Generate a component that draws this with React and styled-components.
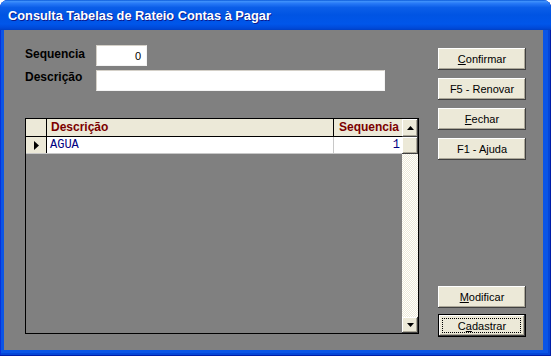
import React from 'react';
import styled, { createGlobalStyle } from 'styled-components';

const Global = createGlobalStyle`
  html, body { margin: 0; padding: 0; background: #ffffff; overflow: hidden; }
  body { width: 551px; height: 356px; font-family: "Liberation Sans", Arial, sans-serif; }
`;

const Window = styled.div`
  width: 551px;
  height: 356px;
  box-sizing: border-box;
  display: flex;
  flex-direction: column;
  background: #0a55e6;
  border-radius: 8px 8px 0 0;
  box-shadow: inset -1px -1px 0 #001ea8, inset 1px 0 0 #0831d9, inset -3px -3px 0 #0546d8;
  overflow: hidden;
`;

const TitleBar = styled.div`
  height: 30px;
  flex: none;
  display: flex;
  align-items: center;
  padding-left: 8px;
  background: linear-gradient(
    180deg,
    #0a5ad8 0%,
    #3d8ffa 5%,
    #2678f6 12%,
    #0b5ee8 25%,
    #0054e3 50%,
    #0056ea 80%,
    #0049d8 94%,
    #0040c4 100%
  );
  color: #ffffff;
  font: bold 12.8px "Liberation Sans", Arial, sans-serif;
  text-shadow: 1px 1px 0 #0c1a8c;
`;

const Client = styled.div`
  flex: 1;
  display: flex;
  background: #808080;
  margin: 0 8px 6px 4px;
`;

const LeftColumn = styled.div`
  width: 394px;
  padding: 15px 0 0 21px;
  display: flex;
  flex-direction: column;
`;

const Form = styled.div`
  display: grid;
  grid-template-columns: 71px auto;
  row-gap: 4px;
  align-items: start;
`;

const Label = styled.div`
  font: bold 12px "Liberation Sans", Arial, sans-serif;
  color: #000000;
  line-height: 14px;
  padding-top: ${p => p.$top}px;
`;

const Input = styled.div`
  box-sizing: border-box;
  width: ${p => p.$w}px;
  height: ${p => p.$h}px;
  background: #ffffff;
  border: 1px solid #d4d0c8;
  border-right-color: #f4f4f4;
  border-bottom-color: #f4f4f4;
  font: 11px "Liberation Sans", Arial, sans-serif;
  color: #000;
  display: flex;
  align-items: center;
  justify-content: flex-end;
  padding-right: 5px;
`;

const DataGrid = styled.div`
  margin-top: 27px;
  box-sizing: border-box;
  width: 394px;
  height: 216px;
  border: 1px solid #000000;
  display: flex;
`;

const TableArea = styled.div`
  flex: 1;
  display: flex;
  flex-direction: column;
`;

const Row = styled.div`
  display: grid;
  grid-template-columns: 21px 287px 1fr;
  height: ${p => p.$h}px;
  box-sizing: border-box;
  border-bottom: 1px solid ${p => p.$line};
`;

const HeaderCell = styled.div`
  box-sizing: border-box;
  background: #ece9d8;
  border-right: ${p => (p.$last ? 'none' : '1px solid #000')};
  font: bold 12px "Liberation Sans", Arial, sans-serif;
  color: #7b0000;
  line-height: 17px;
  text-align: ${p => (p.$right ? 'right' : 'left')};
  padding: ${p => (p.$right ? '0 3px 0 0' : '0 0 0 4px')};
  white-space: nowrap;
`;

const IndicatorCell = styled.div`
  box-sizing: border-box;
  background: #ece9d8;
  border-right: 1px solid #000;
  display: flex;
  align-items: center;
  justify-content: center;
`;

const DataCell = styled.div`
  box-sizing: border-box;
  background: #ffffff;
  border-right: ${p => (p.$last ? 'none' : '1px solid #c8c8c8')};
  font: 12px "Liberation Mono", "Courier New", monospace;
  color: #000080;
  line-height: 16px;
  text-align: ${p => (p.$right ? 'right' : 'left')};
  padding: ${p => (p.$right ? '0 2px 0 0' : '0 0 0 3px')};
`;

const Scrollbar = styled.div`
  width: 16px;
  display: flex;
  flex-direction: column;
`;

const ScrollButton = styled.div`
  box-sizing: border-box;
  height: ${p => p.$h}px;
  background: #ece9d8;
  box-shadow: inset -1px -1px 0 #404040, inset 1px 1px 0 #ffffff, inset -2px -2px 0 #aca899;
  display: flex;
  align-items: center;
  justify-content: center;
`;

const Track = styled.div`
  flex: 1;
  background-color: #ffffff;
  background-image: conic-gradient(#ece9d8 25%, #ffffff 0 50%, #ece9d8 0 75%, #ffffff 0);
  background-size: 2px 2px;
`;

const RightColumn = styled.div`
  margin-left: 19px;
  width: 88px;
  padding: 18px 0 13px;
  display: flex;
  flex-direction: column;
  justify-content: space-between;
`;

const ButtonGroup = styled.div`
  display: flex;
  flex-direction: column;
  gap: ${p => p.$gap}px;
`;

const Button = styled.div`
  box-sizing: border-box;
  width: 88px;
  height: ${p => (p.$default ? 23 : 22)}px;
  background: #ece9d8;
  border: ${p => (p.$default ? '1px solid #000' : 'none')};
  box-shadow: inset -1px -1px 0 #404040, inset 1px 1px 0 #ffffff, inset -2px -2px 0 #aca899;
  font: 11px "Liberation Sans", Arial, sans-serif;
  color: #000;
  display: flex;
  align-items: center;
  justify-content: center;
  position: relative;
  white-space: pre;
`;

const FocusRect = styled.div`
  position: absolute;
  inset: 3px 4px 3px 3px;
  border: 1px dotted #000;
  pointer-events: none;
`;

const Mn = styled.span`
  text-decoration: underline;
  text-underline-offset: 1px;
`;

const TriangleUp = () => (
  <svg width="7" height="4" viewBox="0 0 7 4"><path d="M3.5 0 L7 4 L0 4 Z" fill="#000" /></svg>
);
const TriangleDown = () => (
  <svg width="7" height="4" viewBox="0 0 7 4"><path d="M0 0 L7 0 L3.5 4 Z" fill="#000" /></svg>
);
const RowArrow = () => (
  <svg width="5" height="9" viewBox="0 0 5 9"><path d="M0 0 L5 4.5 L0 9 Z" fill="#000" /></svg>
);

export default function App() {
  return (
    <>
      <Global />
      <Window>
        <TitleBar>Consulta Tabelas de Rateio Contas à Pagar</TitleBar>
        <Client>
          <LeftColumn>
            <Form>
              <Label $top={2}>Sequencia</Label>
              <Input $w={51} $h={21}>0</Input>
              <Label $top={0}>Descrição</Label>
              <Input $w={289} $h={21} />
            </Form>
            <DataGrid>
              <TableArea>
                <Row $h={18} $line="#000">
                  <HeaderCell />
                  <HeaderCell>Descrição</HeaderCell>
                  <HeaderCell $last $right>Sequencia</HeaderCell>
                </Row>
                <Row $h={17} $line="#c8c8c8">
                  <IndicatorCell><RowArrow /></IndicatorCell>
                  <DataCell>AGUA</DataCell>
                  <DataCell $last $right>1</DataCell>
                </Row>
              </TableArea>
              <Scrollbar>
                <ScrollButton $h={18}><TriangleUp /></ScrollButton>
                <ScrollButton $h={17} />
                <Track />
                <ScrollButton $h={16}><TriangleDown /></ScrollButton>
              </Scrollbar>
            </DataGrid>
          </LeftColumn>
          <RightColumn>
            <ButtonGroup $gap={8}>
              <Button><Mn>C</Mn>onfirmar</Button>
              <Button>F5 - Renovar</Button>
              <Button><Mn>F</Mn>echar</Button>
              <Button>F1 - Ajuda</Button>
            </ButtonGroup>
            <ButtonGroup $gap={6}>
              <Button><Mn>M</Mn>odificar</Button>
              <Button $default>C<Mn>a</Mn>dastrar<FocusRect /></Button>
            </ButtonGroup>
          </RightColumn>
        </Client>
      </Window>
    </>
  );
}
